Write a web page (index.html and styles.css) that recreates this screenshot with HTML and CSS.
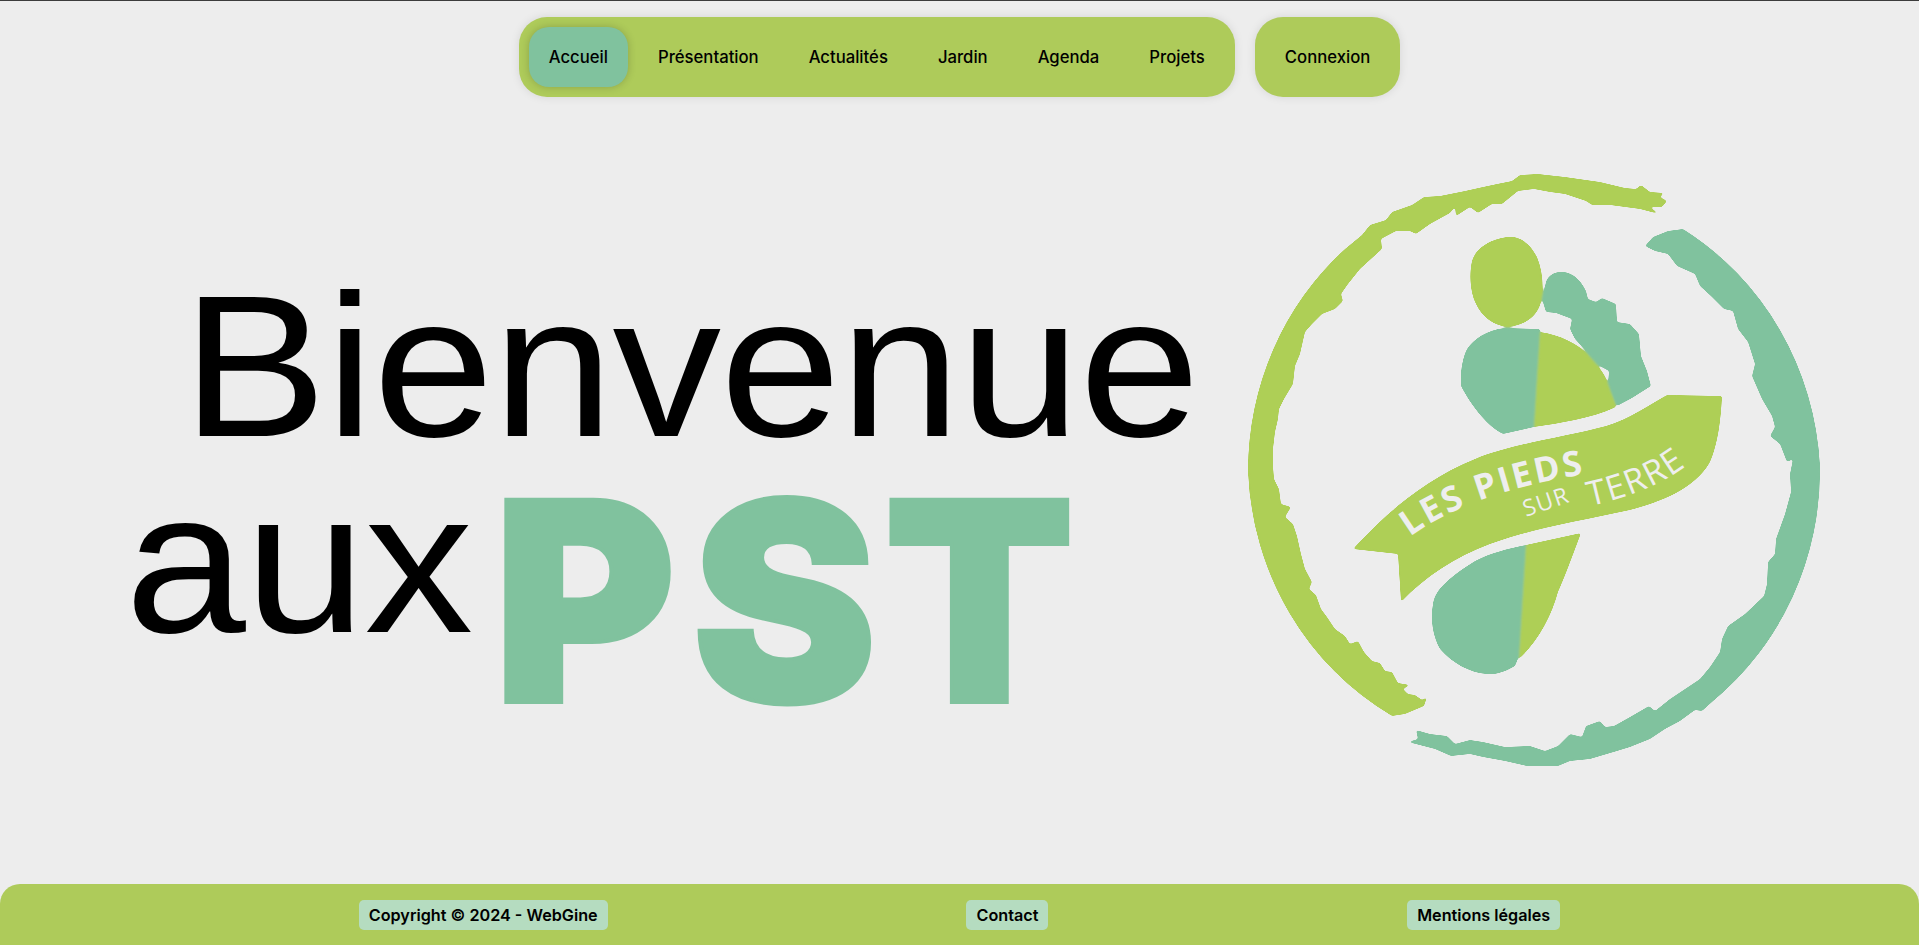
FILE: index.html
```html
<!DOCTYPE html>
<html lang="fr">
<head>
<meta charset="utf-8">
<title>Les Pieds sur Terre</title>
<link rel="stylesheet" href="styles.css">
</head>
<body>
<div class="page">
  <header class="topbar">
    <nav class="pill nav-main">
      <a class="nav-link active">Accueil</a>
      <a class="nav-link">Présentation</a>
      <a class="nav-link">Actualités</a>
      <a class="nav-link">Jardin</a>
      <a class="nav-link">Agenda</a>
      <a class="nav-link">Projets</a>
    </nav>
    <nav class="pill nav-login">
      <a class="nav-link">Connexion</a>
    </nav>
  </header>
  <main class="hero">
    <h1 class="headline">
      <span class="line-one">Bienvenue</span>
      <span class="line-two"><span class="aux">aux</span><span class="pst"><span class="pst-first">P</span>ST</span></span>
    </h1>
    <svg class="logo" viewBox="1230 170 620 620" width="620" height="620" role="img" aria-label="Les Pieds sur Terre">
      <defs>
        <filter id="organic" x="-5%" y="-5%" width="110%" height="110%">
          <feGaussianBlur stdDeviation="1.1"/>
          <feComponentTransfer>
            <feFuncA type="linear" slope="6" intercept="-2.5"/>
          </feComponentTransfer>
        </filter>
        <path id="pieds-line" d="M1410 538C1450 508 1510 486 1604 472"/>
        <path id="terre-line" d="M1590 507C1632 498 1680 480 1708 446"/>
      </defs>
      <g filter="url(#organic)">
        <path class="lime" d="M1667 202L1660 198 1664 194 1650 193 1641 186 1636 190 1625 189 1600 183 1565 178 1538 175 1520 176 1512 182 1497 185 1483 188 1465 192 1440 197 1424 198 1412 206 1392 213 1386 221 1370 226 1362 236 1345 250A286 295 0 0 0 1248 473A286 295 0 0 0 1392 717L1405 715 1424 707 1427 698 1422 701 1415 696 1408 695 1403 690 1410 686 1398 684 1392 673 1385 672 1380 664 1372 662 1364 653 1358 642 1350 645 1345 637 1335 630 1327 618 1321 610 1316 596 1309 590 1312 583 1305 570 1301 555 1297 537 1293 525 1285 518 1291 508 1281 505 1279 490 1274 480 1273 467 1273 450 1275 433 1278 420 1279 410 1284 400 1293 385 1295 367 1300 355 1305 333 1312 325 1322 315 1335 310 1343 302 1341 295 1348 285 1360 270 1382 250 1381 240 1396 232 1410 232 1416 235 1430 225 1450 214 1455 208 1456 217 1470 208 1478 214 1492 205 1502 205 1518 192 1534 190 1550 193 1565 195 1586 202 1592 206 1610 206 1625 208 1640 210 1659 215 1650 208 1662 208Z"/>
        <path class="teal" d="M1645 247L1653 238 1668 232 1683 230A286 295 0 0 1 1820 467A286 295 0 0 1 1712 703L1702 712 1695 711 1680 722 1665 730 1650 740 1630 748 1617 752 1590 760 1570 762 1558 767 1527 767 1505 762 1483 758 1470 755 1451 757 1435 750 1408 743 1418 740 1416 731 1430 735 1447 737 1455 745 1470 741 1483 743 1505 748 1530 747 1545 752 1558 747 1570 735 1582 738 1586 727 1600 722 1605 728 1614 727 1630 718 1649 707 1655 712 1670 700 1685 690 1700 680 1710 668 1720 653 1722 640 1728 627 1745 615 1764 597 1767 585 1768 563 1775 555 1776 540 1785 515 1791 493 1790 475 1793 460 1787 463 1780 445 1770 437 1775 428 1772 417 1762 400 1752 377 1755 365 1748 343 1738 330 1733 312 1724 310 1712 298 1700 287 1695 275 1677 267 1668 255 1655 252Z"/>
        <path class="lime" d="M1507 238C1522 236 1532 248 1537 258C1543 272 1544 290 1541 303C1537 318 1525 326 1508 328C1494 327 1482 318 1476 305C1470 293 1469 275 1472 262C1476 248 1492 240 1507 238Z"/>
        <path class="teal" d="M1546 283C1548 276 1556 272 1564 273C1574 274 1582 283 1586 292L1588 300 1596 303 1602 299 1616 305 1617 323 1630 325 1639 335 1641 357 1647 372 1651 387 1632 399 1617 407 1608 385 1609 372 1596 365 1586 352 1575 340 1570 330 1572 320 1556 314 1546 313 1542 300Z"/>
        <path class="teal" d="M1467 350C1474 340 1486 331 1505 329L1540 330 1534 428 1503 435C1488 428 1472 408 1461 387C1460 375 1462 360 1467 350Z"/>
        <path class="lime" d="M1540 333C1560 336 1578 344 1590 358C1600 368 1606 378 1607 382L1616 408C1590 420 1560 424 1534 428Z"/>
        <path class="teal" d="M1526 546L1519 657 1515 667C1505 673 1495 676 1487 675C1470 674 1452 664 1440 650C1433 638 1430 620 1433 605C1435 590 1450 578 1475 562C1490 554 1510 549 1526 546Z"/>
        <path class="lime" d="M1526 546L1581 534C1575 550 1566 575 1558 593C1552 615 1540 640 1519 660Z"/>
        <path class="lime" d="M1667 396L1722 397C1721 420 1718 445 1710 463C1695 490 1660 503 1630 511C1580 522 1530 530 1490 545C1455 558 1425 578 1401 603L1398 555 1353 550C1385 515 1425 480 1475 460C1510 445 1570 437 1606 427C1630 420 1650 405 1667 396Z"/>
      </g>
      <text class="banner-bold"><textPath href="#pieds-line">LES PIEDS</textPath></text>
      <text class="banner-thin sur" transform="rotate(-19 1526 518)" x="1526" y="518">SUR</text>
      <text class="banner-thin"><textPath href="#terre-line">TERRE</textPath></text>
    </svg>
  </main>
  <footer class="footer">
    <a class="foot-link">Copyright © 2024 - WebGine</a>
    <a class="foot-link">Contact</a>
    <a class="foot-link">Mentions légales</a>
  </footer>
</div>
</body>
</html>
```
FILE: styles.css
```css
* { box-sizing: border-box; }

html, body {
  margin: 0;
  height: 100%;
  overflow: hidden;
}

body {
  background: #ededed;
  color: #000;
  font-family: "Inter", "Liberation Sans", sans-serif;
}

.page {
  display: flex;
  flex-direction: column;
  height: 945px;
  border-top: 1px solid #3c3c3c;
}

.topbar {
  display: flex;
  justify-content: center;
  gap: 20px;
  padding-top: 16px;
}

.pill {
  display: flex;
  align-items: center;
  gap: 10px;
  height: 80px;
  padding: 0 10px;
  background: #aecb5a;
  border-radius: 28px;
  box-shadow: 0 0 10px rgba(0, 0, 0, 0.1);
}

.nav-link {
  display: flex;
  align-items: center;
  height: 60px;
  padding: 0 20px;
  border-radius: 20px;
  font-size: 16.7px;
  font-weight: 500;
}

.nav-link.active {
  background: #80c29e;
  box-shadow: 0 0 8px rgba(0, 0, 0, 0.2);
}

.hero {
  flex: 1;
  display: flex;
  min-height: 0;
}

.headline {
  flex: none;
  width: 1240px;
  margin: 0;
  padding: 188px 0 0 125px;
  font-family: "Liberation Sans", Arial, sans-serif;
  font-weight: 400;
  font-size: 203px;
  line-height: 0.8;
  letter-spacing: -1px;
}

.line-one {
  display: block;
  margin-left: 57px;
  transform: scaleX(1.07);
  transform-origin: left center;
}

.line-two {
  display: flex;
  align-items: flex-start;
  margin-top: 34px;
}

.aux {
  display: block;
  transform: scaleX(1.07);
  transform-origin: left center;
}

.pst {
  display: block;
  margin: 18px 0 0 44px;
  font-family: "Inter", "Liberation Sans", sans-serif;
  font-weight: 900;
  font-size: 278px;
  line-height: 0.74;
  letter-spacing: 7px;
  color: #80c29e;
  -webkit-text-stroke: 4px #80c29e;
}

.pst-first {
  letter-spacing: 16px;
}

.logo {
  flex: none;
  margin-top: 72px;
  margin-left: -10px;
}

.lime { fill: #aecf57; }
.teal { fill: #80c29e; }

.banner-bold,
.banner-thin {
  fill: #eeeeee;
  font-family: "Open Sans", "Liberation Sans", sans-serif;
}

.banner-bold {
  font-size: 35px;
  font-weight: 700;
  letter-spacing: 2.5px;
}

.banner-thin {
  font-size: 34px;
  font-weight: 400;
  letter-spacing: 1.5px;
}

.banner-thin.sur {
  font-size: 23px;
}

.footer {
  flex: none;
  display: flex;
  justify-content: space-evenly;
  align-items: flex-start;
  height: 61px;
  padding-top: 16px;
  background: #aecb5a;
  border-radius: 20px 20px 0 0;
}

.foot-link {
  display: flex;
  align-items: center;
  height: 30px;
  padding: 0 10px;
  background: #b5dcc0;
  border-radius: 5px;
  font-size: 16.2px;
  font-weight: 600;
}
```
